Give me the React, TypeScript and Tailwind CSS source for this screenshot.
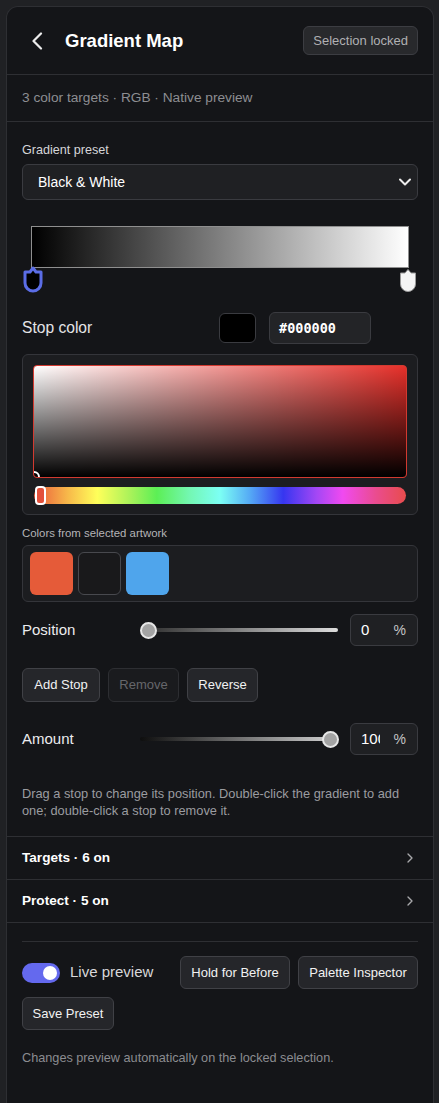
import React from "react";
import { ChevronRight } from "lucide-react";

const font = { fontFamily: '"Liberation Sans", Arial, sans-serif' };

const hue =
  "linear-gradient(to right, #ea5a3c 0%, #f7b84a 9%, #ffff5a 17%, #a8f25a 26%, #5cef55 33%, #74f7b4 42%, #7cfff4 50%, #55aaf5 58%, #3636f0 67%, #a447f5 76%, #f04af0 83%, #ea4c8e 92%, #e84c4c 100%)";

const Btn = ({
  children,
  w,
  disabled,
}: {
  children: React.ReactNode;
  w: string;
  disabled?: boolean;
}) => (
  <button
    className={
      disabled
        ? `${w} h-[34px] rounded-md border border-[#2d2e32] bg-[#1a1b1e] text-[13px] text-[#66676b]`
        : `${w} h-[34px] rounded-md border border-[#404146] bg-[#25262a] text-[13px] text-[#f2f2f2]`
    }
  >
    {children}
  </button>
);

const Slider = ({ pos, track }: { pos: number; track: string }) => (
  <div className="relative flex-1 h-[16px] flex items-center">
    <div className="w-full h-[4px] rounded-full" style={{ background: track }} />
    <div
      className="absolute top-0 w-[17px] h-[17px] -ml-[8px] rounded-full bg-[#a3a3a3] border-2 border-[#e6e6e6]"
      style={{ left: pos }}
    />
  </div>
);

const NumBox = ({ value }: { value: string }) => (
  <div className="w-[68px] h-[32px] ml-[12px] flex items-center rounded-md border border-[#3a3b40] bg-[#1f2023] pl-[10px] pr-[11px]">
    <span className="w-[19px] overflow-hidden whitespace-nowrap text-[15px] text-white">{value}</span>
    <span className="ml-auto text-[14px] text-[#c4c4c6]">%</span>
  </div>
);

export default function App() {
  return (
    <div className="min-h-[1103px] bg-[#202124] pt-[6px] pl-[6px] pr-[5px]" style={font}>
      <div className="min-h-[1097px] rounded-t-xl border border-b-0 border-[#2e2f33] bg-[#141518] text-white">
        {/* header */}
        <div className="h-[68px] flex items-center justify-between pl-[24px] pr-[15px] border-b border-[#2e2f33]">
          <div className="flex items-center">
            <svg width="12" height="18" viewBox="0 0 12 18" fill="none">
              <path d="M10 1.5 L2.5 9 L10 16.5" stroke="#ececec" strokeWidth="2.2" strokeLinecap="round" strokeLinejoin="round" />
            </svg>
            <h1 className="ml-[22px] text-[18.5px] font-bold text-white">Gradient Map</h1>
          </div>
          <span className="h-[29px] px-[9px] flex items-center rounded-md border border-[#3c3d42] bg-[#28292c] text-[13px] text-[#b0b0b3]">
            Selection locked
          </span>
        </div>

        <div className="h-[47px] flex items-center px-[15px] border-b border-[#2e2f33] text-[13.7px] text-[#8d8e92]">
          3 color targets · RGB · Native preview
        </div>

        <div className="px-[15px] pt-[20px]">
          <div className="text-[12.6px] leading-[16px] text-[#d6d6d8]">Gradient preset</div>
          <div className="mt-[6px] h-[36px] flex items-center justify-between rounded-md border border-[#3a3b40] bg-[#1f2023] pl-[15px] pr-[6px]">
            <span className="text-[14px] text-white">Black &amp; White</span>
            <svg width="12" height="8" viewBox="0 0 12 8" fill="none">
              <path d="M1 1.5 L6 6.5 L11 1.5" stroke="#ececec" strokeWidth="2" strokeLinecap="round" strokeLinejoin="round" />
            </svg>
          </div>

          {/* gradient bar */}
          <div className="relative mt-[26px] h-[66px]">
            <div
              className="mx-[9px] h-[42px] border border-[#8f8f8f]"
              style={{ background: "linear-gradient(to right, #000, #fff)" }}
            />
            <svg className="absolute left-0 top-[40px]" width="22" height="27" viewBox="0 0 22 27">
              <path
                d="M3 6 H8 L11 2 L14 6 H19 V17 A8 8 0 0 1 11 25 A8 8 0 0 1 3 17 Z"
                fill="#000"
                stroke="#5b6de6"
                strokeWidth="3"
                strokeLinejoin="round"
              />
            </svg>
            <svg className="absolute left-[377px] top-[42px]" width="18" height="25" viewBox="0 0 18 25">
              <path
                d="M1.5 5 H6 L9 1.5 L12 5 H16.5 V16 A7.5 7.5 0 0 1 9 23.5 A7.5 7.5 0 0 1 1.5 16 Z"
                fill="#f4f4f4"
                stroke="#9a9a9a"
                strokeWidth="1"
              />
            </svg>
          </div>

          {/* stop color */}
          <div className="mt-[20px] flex items-center h-[32px]">
            <span className="w-[197px] text-[15.6px] text-[#e4e4e6]">Stop color</span>
            <div className="w-[37px] h-[30px] rounded-md border border-[#3a3b40] bg-black" />
            <div className="ml-[13px] w-[102px] h-[32px] flex items-center rounded-md border border-[#3a3b40] bg-[#232427] pl-[9px]">
              <span className="text-[13.5px] font-bold text-white" style={{ fontFamily: '"DejaVu Sans Mono", monospace' }}>
                #000000
              </span>
            </div>
          </div>

          {/* picker */}
          <div className="mt-[10px] rounded-md border border-[#34353a] bg-[#1c1d20] p-[10px]">
            <div
              className="relative h-[113px] overflow-hidden rounded-sm border border-[#d23a30]"
              style={{
                background:
                  "linear-gradient(to top, #000, rgba(0,0,0,0)), linear-gradient(to right, #fff, rgba(255,255,255,0)), #e6302a",
              }}
            >
              <div className="absolute -left-[6px] -bottom-[6px] w-[12px] h-[12px] rounded-full border-2 border-white" />
            </div>
            <div className="relative mt-[9px] mx-[1px] h-[17px] rounded-full" style={{ background: hue }}>
              <div className="absolute left-[1px] -top-[1px] w-[11px] h-[19px] rounded-[4px] border-2 border-white bg-[#e3503b]" />
            </div>
          </div>

          {/* artwork colors */}
          <div className="mt-[11px] text-[11.4px] leading-[14px] text-[#b4b4b7]">Colors from selected artwork</div>
          <div className="mt-[5px] h-[57px] flex items-center gap-[5px] rounded-md border border-[#34353a] bg-[#1c1d20] px-[7px]">
            <div className="w-[43px] h-[43px] rounded-md bg-[#e55b39]" />
            <div className="w-[43px] h-[43px] rounded-md border border-[#48494e] bg-[#19191b]" />
            <div className="w-[43px] h-[43px] rounded-md bg-[#4fa5ec]" />
          </div>

          {/* position */}
          <div className="mt-[12px] h-[32px] flex items-center">
            <span className="w-[118px] text-[15px] font-medium text-[#ececee]">Position</span>
            <Slider pos={8} track="linear-gradient(to right, #2a2a2a, #dcdcdc)" />
            <NumBox value="0" />
          </div>

          <div className="mt-[22px] flex gap-[8px]">
            <Btn w="w-[78px]">Add Stop</Btn>
            <Btn w="w-[71px]" disabled>
              Remove
            </Btn>
            <Btn w="w-[71px]">Reverse</Btn>
          </div>

          {/* amount */}
          <div className="mt-[21px] h-[32px] flex items-center">
            <span className="w-[118px] text-[15px] font-medium text-[#ececee]">Amount</span>
            <Slider pos={190} track="linear-gradient(to right, #0e0e0e, #d4d4d4)" />
            <NumBox value="100" />
          </div>

          <p className="mt-[30px] pb-[17px] text-[12.8px] leading-[17px] text-[#9b9ca0]">
            Drag a stop to change its position. Double-click the gradient to add one; double-click a stop to remove it.
          </p>
        </div>

        {/* collapsibles */}
        <div className="border-t border-[#2e2f33]">
          <div className="h-[43px] flex items-center justify-between px-[15px] border-b border-[#2e2f33]">
            <span className="text-[13.6px] font-bold text-white">Targets · 6 on</span>
            <ChevronRight size={16} strokeWidth={2} className="text-[#a8a8ab]" />
          </div>
          <div className="h-[43px] flex items-center justify-between px-[15px] border-b border-[#2e2f33]">
            <span className="text-[13.6px] font-bold text-white">Protect · 5 on</span>
            <ChevronRight size={16} strokeWidth={2} className="text-[#a8a8ab]" />
          </div>
        </div>

        {/* footer */}
        <div className="px-[15px] pt-[18px]">
          <div className="border-t border-[#2e2f33]" />
          <div className="mt-[14px] flex flex-wrap gap-[8px]">
            <div className="mr-auto h-[33px] flex items-center">
              <div className="w-[38px] h-[20px] rounded-full bg-[#6469ee] flex items-center justify-end pr-[3px]">
                <div className="w-[14px] h-[14px] rounded-full bg-white" />
              </div>
              <span className="ml-[10px] text-[15px] text-[#d8d8da]">Live preview</span>
            </div>
            <button className="w-[110px] h-[33px] rounded-md border border-[#404146] bg-[#25262a] text-[13px] text-[#f2f2f2]">
              Hold for Before
            </button>
            <button className="w-[120px] h-[33px] rounded-md border border-[#404146] bg-[#25262a] text-[13px] text-[#f2f2f2]">
              Palette Inspector
            </button>
            <button className="w-[92px] h-[33px] rounded-md border border-[#404146] bg-[#25262a] text-[13px] text-[#f2f2f2]">
              Save Preset
            </button>
          </div>
          <p className="mt-[20px] text-[12.7px] leading-[16px] text-[#8b8c90]">
            Changes preview automatically on the locked selection.
          </p>
        </div>
      </div>
    </div>
  );
}
